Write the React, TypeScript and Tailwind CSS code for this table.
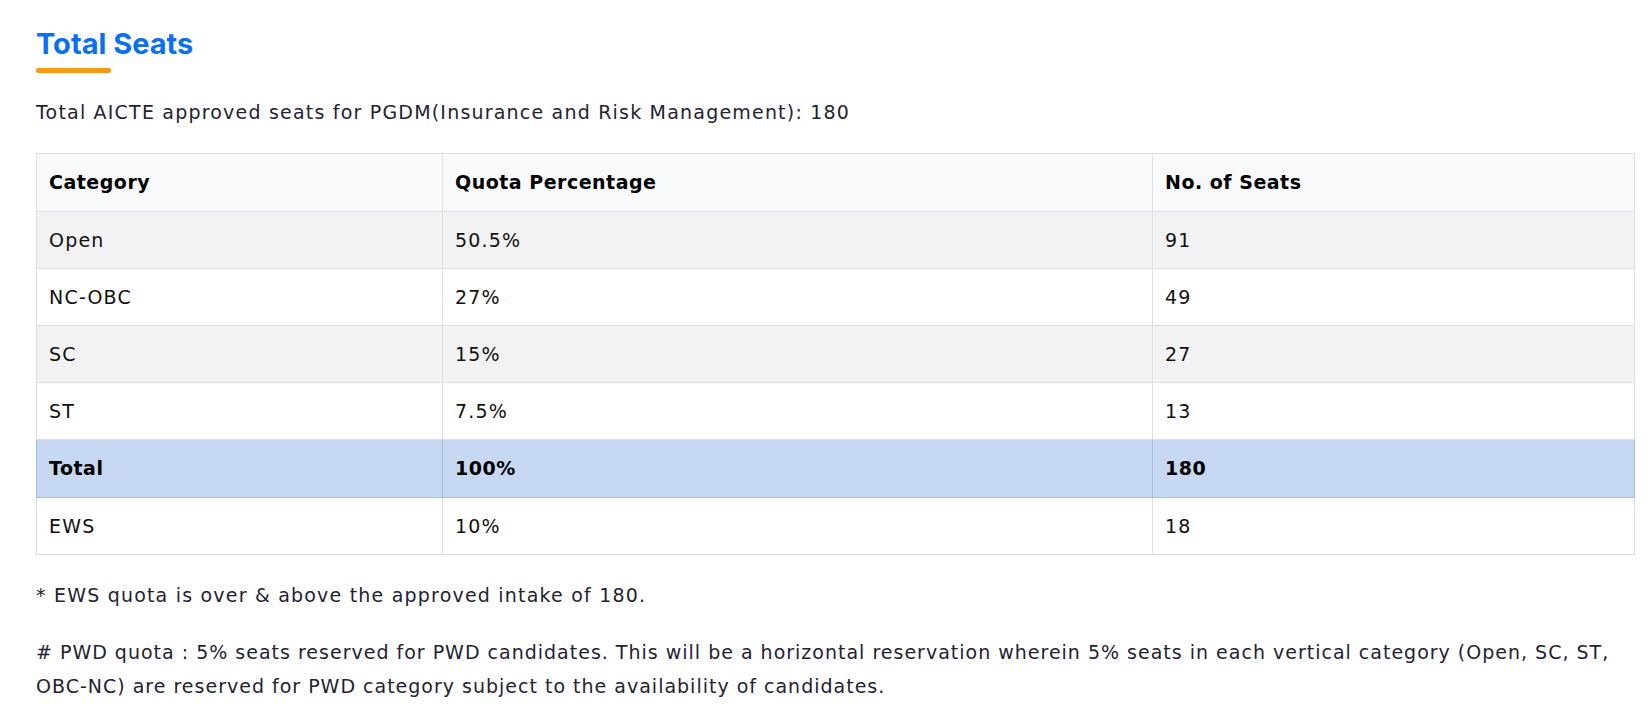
const rows = [
  { cat: "Open", quota: "50.5%", seats: "91", bg: "bg-[#f2f2f2]" },
  { cat: "NC-OBC", quota: "27%", seats: "49", bg: "bg-white" },
  { cat: "SC", quota: "15%", seats: "27", bg: "bg-[#f2f2f2]" },
  { cat: "ST", quota: "7.5%", seats: "13", bg: "bg-white" },
];

const cell = "border border-[#dcdfe3] px-3 align-middle";

export default function App() {
  return (
    <div className="min-h-screen bg-white pl-9 pr-3 pt-[26px] font-['DejaVu_Sans',sans-serif] text-[19px] tracking-[1.2px] text-[#1f2333]">
      <h2 className="font-['Inter',sans-serif] text-[29px] font-bold leading-[36px] tracking-normal text-[#0b6ef6]">
        Total Seats
      </h2>
      <div className="mt-[6px] h-[5px] w-[75px] rounded-full bg-[#f39c12]" />
      <p className="mt-[25px] leading-[28px]">
        Total AICTE approved seats for PGDM(Insurance and Risk Management): 180
      </p>

      <table className="mt-[27px] w-[1599px] table-fixed border-collapse border border-[#dcdfe3] text-left text-[#111]">
        <colgroup>
          <col className="w-[406px]" />
          <col className="w-[710px]" />
          <col />
        </colgroup>
        <thead>
          <tr className="h-[58px] bg-[#f8f9fa]">
            <th className={`${cell} font-bold tracking-[0.5px] text-black`}>Category</th>
            <th className={`${cell} font-bold tracking-[0.5px] text-black`}>Quota Percentage</th>
            <th className={`${cell} font-bold tracking-[0.5px] text-black`}>No. of Seats</th>
          </tr>
        </thead>
        <tbody>
          {rows.map((r) => (
            <tr key={r.cat} className={`h-[57px] ${r.bg}`}>
              <td className={cell}>{r.cat}</td>
              <td className={cell}>{r.quota}</td>
              <td className={cell}>{r.seats}</td>
            </tr>
          ))}
          <tr className="h-[58px] bg-[#c6d8f2] font-bold tracking-[0.5px] text-black">
            <td className="border border-[#a9bedd] px-3">Total</td>
            <td className="border border-[#a9bedd] px-3">100%</td>
            <td className="border border-[#a9bedd] px-3">180</td>
          </tr>
          <tr className="h-[57px] bg-white">
            <td className={cell}>EWS</td>
            <td className={cell}>10%</td>
            <td className={cell}>18</td>
          </tr>
        </tbody>
      </table>

      <div className="leading-[34px]">
        <p className="mt-[23px]">* EWS quota is over &amp; above the approved intake of 180.</p>
        <p className="mt-[23px] whitespace-nowrap tracking-[1px]">
          # PWD quota : 5% seats reserved for PWD candidates. This will be a horizontal reservation wherein 5% seats in
          each vertical category (Open, SC, ST,
          <br />
          OBC-NC) are reserved for PWD category subject to the availability of candidates.
        </p>
      </div>
    </div>
  );
}
